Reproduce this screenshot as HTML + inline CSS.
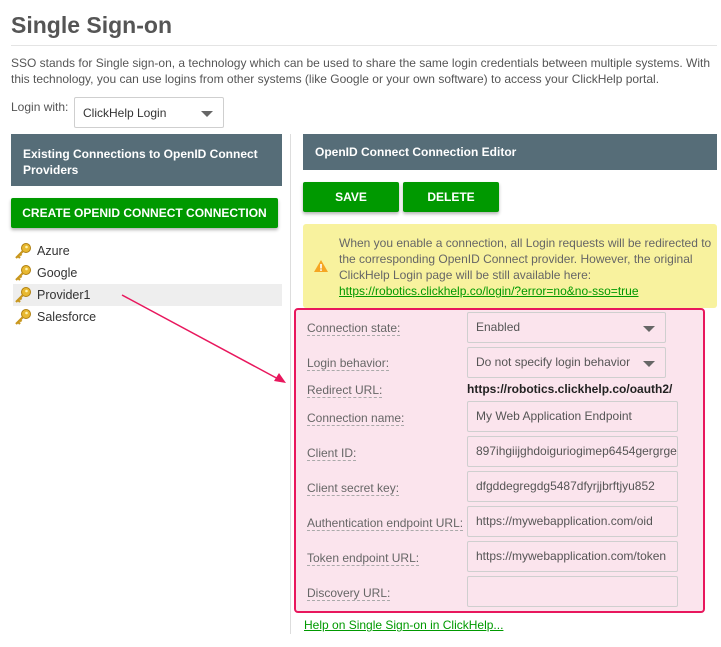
<!DOCTYPE html>
<html><head><meta charset="utf-8"><style>
*{box-sizing:border-box;margin:0;padding:0}
body{width:721px;height:647px;background:#fff;font-family:"Liberation Sans",sans-serif;color:#555;position:relative;overflow:hidden;font-size:12px}
.a{position:absolute}
h1{position:absolute;left:11px;top:12px;font-size:23px;font-weight:bold;color:#555}
.hr{left:11px;top:45px;width:706px;height:1px;background:#e4e4e4}
.hdr{background:#566d78;color:#fff;font-weight:bold;font-size:12px;padding:0 12px}
.btn{background:#009900;color:#fff;font-weight:bold;font-size:12px;text-align:center;border-radius:2px;box-shadow:0 2px 3px rgba(0,0,0,.3)}
.inp{position:absolute;border:1px solid #cfcfcf;background:#fbe4ed;height:31px;padding-left:8px;line-height:29px;color:#555;font-size:12px;overflow:hidden;white-space:nowrap;border-radius:2px}
.lbl{position:absolute;left:307px;border-bottom:1px dashed #aaa;line-height:14px;color:#666;font-size:12px}
.tri{position:absolute;right:10px;top:13px;width:0;height:0;border-left:6px solid transparent;border-right:6px solid transparent;border-top:6px solid #666}
.key{position:absolute;left:14px;width:18px;height:16px}
.it{position:absolute;left:37px;color:#333;font-size:12.5px}
</style></head><body>
<h1>Single Sign-on</h1>
<div class="a hr"></div>
<div class="a" style="left:11px;top:55px;width:706px;line-height:16px;font-size:12px;color:#555">SSO stands for Single sign-on, a technology which can be used to share the same login credentials between multiple systems. With this technology, you can use logins from other systems (like Google or your own software) to access your ClickHelp portal.</div>
<div class="a" style="left:11px;top:100px;color:#555">Login with:</div>
<div class="inp" style="left:74px;top:97px;width:150px;height:31px;background:#fff;color:#333;padding-left:8px;line-height:31px">ClickHelp Login<div class="tri"></div></div>
<div class="a" style="left:290px;top:134px;width:1px;height:500px;background:#ddd"></div>
<div class="a hdr" style="left:11px;top:134px;width:271px;height:52px;padding-top:12px;line-height:16px">Existing Connections to OpenID Connect Providers</div>
<div class="a btn" style="left:11px;top:198px;width:267px;height:30px;line-height:30px">CREATE OPENID CONNECT CONNECTION</div>
<div class="a" style="left:13px;top:284px;width:269px;height:22px;background:#eee"></div>
<svg class="key" style="top:243px" viewBox="0 0 18 16"><circle cx="12" cy="5" r="4.5" fill="#e8b830" stroke="#b08010"/><circle cx="12.5" cy="4" r="1.3" fill="#fff3b0"/><path d="M9 8 L2 15 M4 13 l2 2 M6 11 l1.5 1.5" stroke="#c8961c" stroke-width="2.2" fill="none"/></svg>
<div class="it" style="top:244px">Azure</div>
<svg class="key" style="top:265px" viewBox="0 0 18 16"><circle cx="12" cy="5" r="4.5" fill="#e8b830" stroke="#b08010"/><circle cx="12.5" cy="4" r="1.3" fill="#fff3b0"/><path d="M9 8 L2 15 M4 13 l2 2 M6 11 l1.5 1.5" stroke="#c8961c" stroke-width="2.2" fill="none"/></svg>
<div class="it" style="top:266px">Google</div>
<svg class="key" style="top:287px" viewBox="0 0 18 16"><circle cx="12" cy="5" r="4.5" fill="#e8b830" stroke="#b08010"/><circle cx="12.5" cy="4" r="1.3" fill="#fff3b0"/><path d="M9 8 L2 15 M4 13 l2 2 M6 11 l1.5 1.5" stroke="#c8961c" stroke-width="2.2" fill="none"/></svg>
<div class="it" style="top:288px">Provider1</div>
<svg class="key" style="top:309px" viewBox="0 0 18 16"><circle cx="12" cy="5" r="4.5" fill="#e8b830" stroke="#b08010"/><circle cx="12.5" cy="4" r="1.3" fill="#fff3b0"/><path d="M9 8 L2 15 M4 13 l2 2 M6 11 l1.5 1.5" stroke="#c8961c" stroke-width="2.2" fill="none"/></svg>
<div class="it" style="top:310px">Salesforce</div>
<div class="a hdr" style="left:303px;top:134px;width:414px;height:36px;line-height:36px">OpenID Connect Connection Editor</div>
<div class="a btn" style="left:303px;top:182px;width:96px;height:30px;line-height:30px">SAVE</div>
<div class="a btn" style="left:403px;top:182px;width:96px;height:30px;line-height:30px">DELETE</div>
<div class="a" style="left:303px;top:224px;width:414px;height:84px;background:#f8f29e;border-radius:3px"></div>
<svg class="a" style="left:313px;top:259px" width="16" height="14" viewBox="0 0 16 14"><path d="M8 1 L15 13 L1 13Z" fill="#f5a623"/><rect x="7.2" y="5" width="1.6" height="4.5" fill="#fff"/><rect x="7.2" y="10.3" width="1.6" height="1.6" fill="#fff"/></svg>
<div class="a" style="left:339px;top:235px;width:375px;line-height:16px;color:#666;font-size:12px">When you enable a connection, all Login requests will be redirected to the corresponding OpenID Connect provider. However, the original ClickHelp Login page will be still available here:<br><span style="color:#009900;text-decoration:underline">https://robotics.clickhelp.co/login/?error=no&amp;no-sso=true</span></div>
<div class="a" style="left:294px;top:308px;width:411px;height:305px;background:#fbe4ed;border:2px solid #e8175d;border-radius:4px"></div>
<div class="lbl" style="top:321px">Connection state:</div>
<div class="inp" style="left:467px;top:312px;width:199px">Enabled<div class="tri"></div></div>
<div class="lbl" style="top:356px">Login behavior:</div>
<div class="inp" style="left:467px;top:347px;width:199px">Do not specify login behavior<div class="tri"></div></div>
<div class="lbl" style="top:383px">Redirect URL:</div>
<div class="a" style="left:467px;top:382px;font-weight:bold;color:#222;font-size:12px">https://robotics.clickhelp.co/oauth2/</div>
<div class="lbl" style="top:411px">Connection name:</div>
<div class="inp" style="left:467px;top:401px;width:211px">My Web Application Endpoint</div>
<div class="lbl" style="top:446px">Client ID:</div>
<div class="inp" style="left:467px;top:436px;width:211px">897ihgiijghdoiguriogimep6454gergrge</div>
<div class="lbl" style="top:481px">Client secret key:</div>
<div class="inp" style="left:467px;top:471px;width:211px">dfgddegregdg5487dfyrjjbrftjyu852</div>
<div class="lbl" style="top:516px">Authentication endpoint URL:</div>
<div class="inp" style="left:467px;top:506px;width:211px">https://mywebapplication.com/oid</div>
<div class="lbl" style="top:551px">Token endpoint URL:</div>
<div class="inp" style="left:467px;top:541px;width:211px">https://mywebapplication.com/token</div>
<div class="lbl" style="top:586px">Discovery URL:</div>
<div class="inp" style="left:467px;top:576px;width:211px"></div>
<div class="a" style="left:304px;top:618px;color:#009900;text-decoration:underline;font-size:12px">Help on Single Sign-on in ClickHelp...</div>
<svg class="a" style="left:0;top:0" width="721" height="647"><line x1="122" y1="295" x2="282" y2="381" stroke="#e8175d" stroke-width="1.5"/><path d="M286 383 L274 381 L279 373Z" fill="#e8175d"/></svg>
</body></html>
